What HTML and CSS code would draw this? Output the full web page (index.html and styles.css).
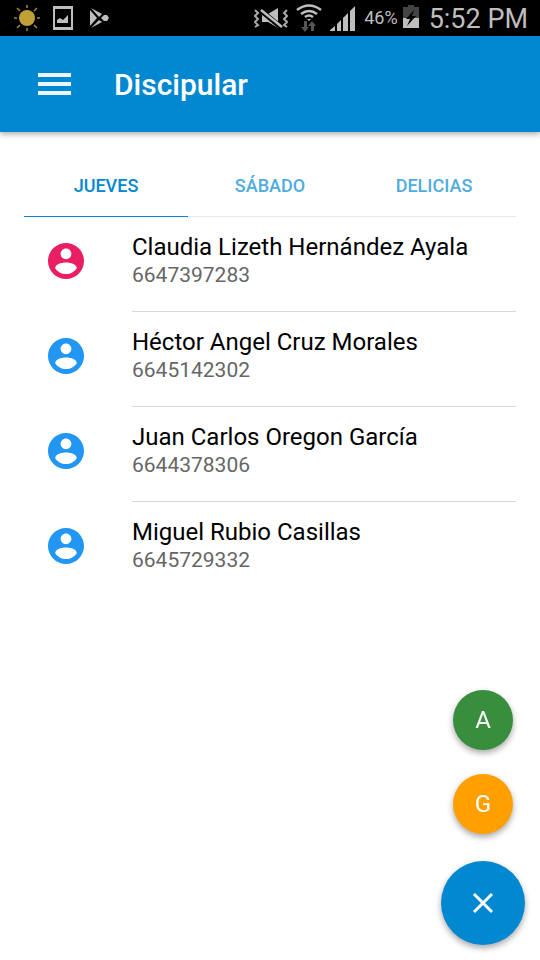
FILE: index.html
```html
<!DOCTYPE html>
<html lang="es">
<head>
<meta charset="utf-8">
<meta name="viewport" content="width=device-width, initial-scale=1">
<title>Discipular</title>
<link rel="stylesheet" href="styles.css">
</head>
<body>
<svg class="defs" aria-hidden="true">
  <symbol id="account" viewBox="2 2 20 20">
    <path d="M12 2C6.48 2 2 6.48 2 12s4.48 10 10 10 10-4.480 10-10S17.520 2 12 2zm0 3c1.660 0 3 1.340 3 3s-1.340 3-3 3-3-1.340-3-3 1.340-3 3-3zm0 14.200c-2.500 0-4.710-1.280-6-3.220.030-1.990 3-3.180 6-3.180s5.970 1.190 6 3.180c-1.290 1.940-3.500 3.220-6 3.220z"/>
  </symbol>
</svg>
<div class="status">
  <div class="status-left">
    <svg width="26" height="26" viewBox="0 0 26 26" aria-hidden="true">
      <circle cx="13" cy="13" r="8" fill="#c1a035"/>
      <path d="M13 0v3M13 23v3M0 13h3M23 13h3M3 3l3 3M20 20l3 3M23 3l-3 3M6 20l-3 3" stroke="#a38a3a" stroke-width="1.500"/>
    </svg>
    <svg width="20" height="24" viewBox="0 0 20 24" aria-hidden="true">
      <path fill="#bebebe" fill-rule="evenodd" d="M0 0h20v24H0zM2 3v18h16V3z"/>
      <path fill="#bebebe" d="M4 17v-3l3-2 3 2 5-5v8z"/>
    </svg>
    <svg width="20" height="20" viewBox="0 0 20 20" aria-hidden="true">
      <path fill="#bebebe" d="M0 2l7 8-7 8zM1 0l11 6-3 3zM1 20l8-8 3 2z"/>
      <path fill="#bebebe" d="M11 10l3-3h3l2 3-2 3h-3z"/>
    </svg>
  </div>
  <div class="status-right">
    <svg width="34" height="24" viewBox="0 0 34 24" aria-hidden="true">
      <path fill="#bebebe" d="M8 8h6l10-6v20l-10-6H8z"/>
      <path d="M5 3l24 20" stroke="#000" stroke-width="5"/>
      <path d="M7 4l21 17" stroke="#bebebe" stroke-width="2.500"/>
      <path d="M1 4l3 3-3 3 3 3-3 3 3 3-3 2M33 4l-3 3 3 3-3 3 3 3-3 3 3 2" fill="none" stroke="#aaa" stroke-width="2"/>
    </svg>
    <svg class="wifi" width="26" height="28" viewBox="0 0 26 28" aria-hidden="true">
      <path d="M1 6q12-9 24 0M5 10q8-6 16 0M9 13q4-3 8 0" fill="none" stroke="#bebebe" stroke-width="2.500"/>
      <path fill="#bebebe" d="M11 15h4l-2 2z"/>
      <path fill="#555" d="M8 17h3v6h2l-4 5-4-5h3zM15 27h3v-5h2l-4-5-4 5h3z"/>
    </svg>
    <svg class="signal" width="26" height="26" viewBox="0 0 26 26" aria-hidden="true">
      <path fill="#bebebe" d="M0 26v-1l5-4v5zM7 26v-7l4-4v11zM13 26V13l5-5v18zM20 26V6l5-5v25z"/>
    </svg>
    <span class="percent">46%</span>
    <svg class="battery" width="16" height="24" viewBox="0 0 16 24" aria-hidden="true">
      <path fill="#444" d="M5 0h6v2h5v11H0V2h5z"/>
      <path fill="#bebebe" d="M0 13h16v10H0z"/>
      <path fill="#000" d="M11 5L3 14h4l-3 7 9-10H9z"/>
    </svg>
    <span class="clock">5:52 PM</span>
  </div>
</div>
<header class="bar">
  <button class="menu" type="button" aria-label="Menú">
    <svg width="33" height="24" viewBox="0 0 33 24" aria-hidden="true"><path fill="#fff" fill-opacity=".92" d="M0 1h33v4H0zM0 10h33v4H0zM0 19h33v4H0z"/></svg>
  </button>
  <h1>Discipular</h1>
</header>
<main>
  <nav class="tabs">
    <a class="tab active" href="#jueves" aria-current="page">JUEVES</a>
    <a class="tab" href="#sabado">SÁBADO</a>
    <a class="tab" href="#delicias">DELICIAS</a>
  </nav>
  <ul class="list">
    <li class="row">
      <svg class="avatar pink" aria-hidden="true"><use href="#account"/></svg>
      <div class="info"><div class="name">Claudia Lizeth Hernández Ayala</div><div class="phone">6647397283</div></div>
    </li>
    <li class="row">
      <svg class="avatar" aria-hidden="true"><use href="#account"/></svg>
      <div class="info"><div class="name">Héctor Angel Cruz Morales</div><div class="phone">6645142302</div></div>
    </li>
    <li class="row">
      <svg class="avatar" aria-hidden="true"><use href="#account"/></svg>
      <div class="info"><div class="name">Juan Carlos Oregon García</div><div class="phone">6644378306</div></div>
    </li>
    <li class="row">
      <svg class="avatar" aria-hidden="true"><use href="#account"/></svg>
      <div class="info"><div class="name">Miguel Rubio Casillas</div><div class="phone">6645729332</div></div>
    </li>
  </ul>
</main>
<div class="fabs">
  <button class="fab green" type="button">A</button>
  <button class="fab orange" type="button">G</button>
  <button class="fab main" type="button" aria-label="Cerrar">
    <svg width="22" height="22" viewBox="0 0 22 22" aria-hidden="true"><path d="M2 2l18 18M20 2L2 20" stroke="#fff" stroke-width="3"/></svg>
  </button>
</div>
</body>
</html>
```
FILE: styles.css
```css
* {
  box-sizing: border-box;
}

body {
  margin: 0;
  min-height: 100vh;
  background: #fff;
  font-family: Roboto, "Liberation Sans", sans-serif;
}

button {
  border: 0;
  padding: 0;
  font-family: inherit;
}

svg {
  display: block;
  flex: none;
}

.defs {
  position: absolute;
  width: 0;
  height: 0;
}

.status {
  display: flex;
  justify-content: space-between;
  height: 36px;
  padding: 0 12px 0 14px;
  background: #000;
  color: #bebebe;
}

.status-left,
.status-right {
  display: flex;
  align-items: center;
}

.status-left {
  gap: 13px;
}

.status-left svg:last-child {
  margin-left: 4px;
}

.wifi {
  margin-left: 8px;
}

.signal {
  margin: 0 8px;
}

.percent {
  margin-right: 5px;
  font-size: 18px;
  line-height: 36px;
}

.battery {
  margin-bottom: 2px;
}

.clock {
  margin-left: 10px;
  padding-top: 3px;
  font-size: 27px;
  line-height: 33px;
}

.bar {
  display: flex;
  align-items: center;
  height: 96px;
  padding: 0 24px;
  background: #0288d1;
  color: #fff;
  box-shadow: 0 2px 6px rgba(0, 0, 0, 0.35);
}

.menu {
  display: grid;
  place-items: center;
  width: 60px;
  height: 60px;
  background: none;
}

.bar h1 {
  margin: 0 0 0 30px;
  font-size: 30px;
  font-weight: 500;
}

main {
  padding: 24px 24px 0;
}

.tabs {
  display: flex;
}

.tab {
  flex: 1;
  height: 61px;
  border-bottom: 1px solid #e8e8e8;
  color: #4eacdf;
  font-size: 18px;
  font-weight: 500;
  line-height: 60px;
  text-align: center;
  text-decoration: none;
}

.tab.active {
  border-color: #0288d1;
  color: #0288d1;
}

.list {
  margin: 0;
  padding: 0;
  list-style: none;
}

.row {
  display: flex;
  gap: 48px;
  padding-left: 24px;
}

.avatar {
  width: 36px;
  height: 36px;
  margin-top: 26px;
  fill: #2196f3;
}

.avatar.pink {
  fill: #e91e63;
}

.info {
  flex: 1;
  min-width: 0;
  padding: 15px 0 22px;
  border-bottom: 1px solid #d8d8d8;
}

.row:last-child .info {
  border-bottom: 0;
}

.name {
  color: #000;
  font-size: 24px;
  line-height: 30px;
}

.phone {
  color: #666;
  font-size: 21px;
  line-height: 27px;
}

.fabs {
  position: fixed;
  right: 15px;
  bottom: 15px;
  display: flex;
  flex-direction: column;
  align-items: center;
}

.fab {
  display: grid;
  place-items: center;
  width: 60px;
  height: 60px;
  margin-bottom: 24px;
  border-radius: 50%;
  color: #fff;
  font-size: 24px;
  box-shadow: 0 3px 6px rgba(0, 0, 0, 0.35);
}

.green {
  background: #388e3c;
}

.orange {
  margin-bottom: 27px;
  background: #ffa000;
}

.fab.main {
  width: 84px;
  height: 84px;
  margin-bottom: 0;
  background: #0288d1;
}
```
